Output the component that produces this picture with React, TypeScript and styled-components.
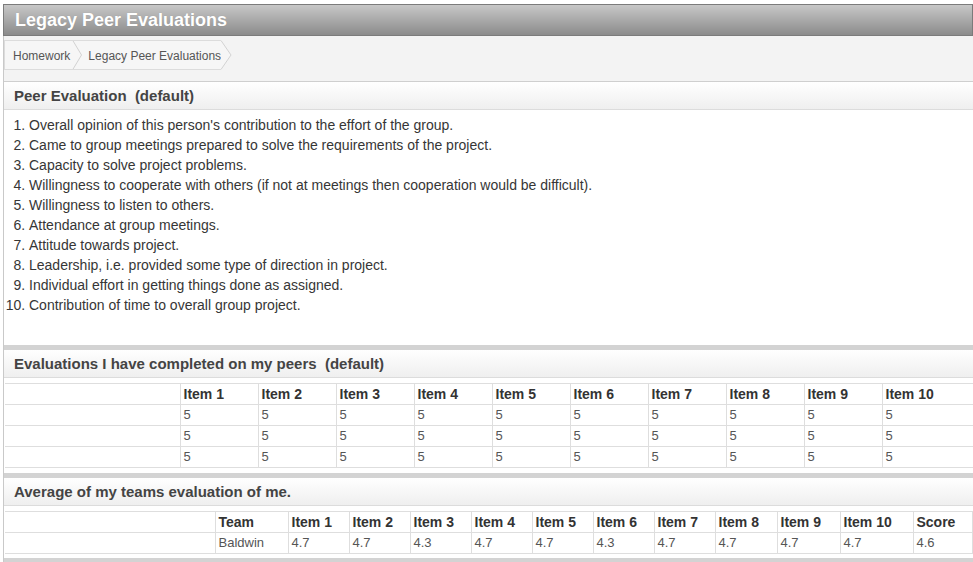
import React from "react";
import styled, { createGlobalStyle } from "styled-components";

const GlobalStyle = createGlobalStyle`
  html, body {
    margin: 0;
    padding: 0;
    background: #ffffff;
  }
  body {
    font-family: "Liberation Sans", Arial, Helvetica, sans-serif;
    color: #333;
  }
`;

const Page = styled.div`
  width: 970px;
  padding: 4px 0 0 3px;
`;

const TitleBar = styled.h1`
  margin: 0;
  height: 30px;
  display: flex;
  align-items: center;
  padding-left: 11px;
  border: 1px solid #7b7b7b;
  background: linear-gradient(#c7c7c7, #8b8b8b);
  color: #fff;
  font-size: 18px;
  font-weight: bold;
  text-shadow: 0 0 1px rgba(0, 0, 0, 0.15);
`;

const Content = styled.div`
  border-left: 1px solid #c9c9c9;
`;

const BreadcrumbBar = styled.nav`
  height: 41px;
  padding-top: 4px;
  background: #f3f3f3;
  display: flex;
  align-items: flex-start;
`;

const Crumbs = styled.div`
  display: flex;
  align-items: stretch;
  height: 30px;
`;

const CrumbTrack = styled.div`
  display: flex;
  align-items: center;
  box-sizing: border-box;
  height: 30px;
  border: 1px solid #dcdcdc;
  border-right: none;
  background: #f6f6f6;
  padding-left: 8px;
`;

const Crumb = styled.span`
  font-size: 12px;
  color: #555;
  padding-top: 3px;
  line-height: 25px;
`;

const Chevron = styled.svg`
  display: block;
  flex: none;
  margin: 0 ${(p) => p.$gap ?? 0}px 0 ${(p) => p.$lead ?? 0}px;
`;

const CrumbSep = ({ lead, gap }: { lead: number; gap: number }) => (
  <Chevron $lead={lead} $gap={gap} width="10" height="28" viewBox="0 0 10 28">
    <polyline points="0.5,-1 9.5,14 0.5,29" fill="none" stroke="#d2d2d2" strokeWidth="1" />
  </Chevron>
);

const CrumbEnd = () => (
  <Chevron width="11" height="30" viewBox="0 0 11 30">
    <polygon points="0,0.5 10,15 0,29.5" fill="#f6f6f6" stroke="none" />
    <polyline points="0,0.5 10,15 0,29.5" fill="none" stroke="#d2d2d2" strokeWidth="1" />
  </Chevron>
);

const Panel = styled.section`
  background: #fff;
  border-top: ${(p) => (p.$first ? "1px solid #cfcfcf" : "none")};
  border-bottom: 5px solid #d3d3d3;
`;

const PanelHeader = styled.h2`
  margin: 0;
  height: 27px;
  display: flex;
  align-items: center;
  padding-left: 10px;
  border-bottom: 1px solid #dcdcdc;
  background: linear-gradient(#ffffff, #efefef);
  color: #444;
  font-size: 15px;
  font-weight: bold;
  white-space: pre;
`;

const ListBody = styled.div`
  height: 235px;
  box-sizing: border-box;
  padding-top: 5px;
`;

const Criteria = styled.ol`
  margin: 0;
  padding: 0 0 0 25px;
  list-style-position: outside;
  font-size: 14px;
  line-height: 20px;
  color: #363636;
`;

const TableBody = styled.div`
  padding: ${(p) => p.$pad};
`;

const Grid = styled.table`
  border-collapse: collapse;
  table-layout: fixed;
  width: 967px;
  margin-left: 1px;
  font-size: 13px;
`;

const HeadCell = styled.th`
  height: 20px;
  padding: 0 3px;
  border: 1px solid #dedede;
  border-left: ${(p) => (p.$blank ? "none" : "1px solid #dedede")};
  text-align: left;
  font-size: 14px;
  font-weight: bold;
  color: #333;
  line-height: 20px;
  white-space: nowrap;
  overflow: hidden;
`;

const Cell = styled.td`
  height: 20px;
  padding: 0 3px;
  border: 1px solid #dedede;
  border-left: ${(p) => (p.$blank ? "none" : "1px solid #dedede")};
  color: #555;
  line-height: 20px;
  white-space: nowrap;
`;

const criteria = [
  "Overall opinion of this person's contribution to the effort of the group.",
  "Came to group meetings prepared to solve the requirements of the project.",
  "Capacity to solve project problems.",
  "Willingness to cooperate with others (if not at meetings then cooperation would be difficult).",
  "Willingness to listen to others.",
  "Attendance at group meetings.",
  "Attitude towards project.",
  "Leadership, i.e. provided some type of direction in project.",
  "Individual effort in getting things done as assigned.",
  "Contribution of time to overall group project.",
];

const items = Array.from({ length: 10 }, (_, i) => `Item ${i + 1}`);

const peerScores = [
  Array(10).fill("5"),
  Array(10).fill("5"),
  Array(10).fill("5"),
];

const myAverage = {
  team: "Baldwin",
  items: ["4.7", "4.7", "4.3", "4.7", "4.7", "4.3", "4.7", "4.7", "4.7", "4.7"],
  score: "4.6",
};

const avgWidths = [210, 73, 61, 61, 61, 61, 61, 61, 61, 62, 63, 73, 59];

export default function App() {
  return (
    <>
      <GlobalStyle />
      <Page>
        <TitleBar>Legacy Peer Evaluations</TitleBar>
        <Content>
          <BreadcrumbBar>
            <Crumbs>
              <CrumbTrack>
                <Crumb>Homework</Crumb>
                <CrumbSep lead={2} gap={6} />
                <Crumb>Legacy Peer Evaluations</Crumb>
              </CrumbTrack>
              <CrumbEnd />
            </Crumbs>
          </BreadcrumbBar>

          <Panel $first>
            <PanelHeader>{"Peer Evaluation  (default)"}</PanelHeader>
            <ListBody>
              <Criteria>
                {criteria.map((c) => (
                  <li key={c}>{c}</li>
                ))}
              </Criteria>
            </ListBody>
          </Panel>

          <Panel>
            <PanelHeader>{"Evaluations I have completed on my peers  (default)"}</PanelHeader>
            <TableBody $pad="5px 0 5px 0">
              <Grid>
                <colgroup>
                  <col style={{ width: 175 }} />
                  {items.map((it) => (
                    <col key={it} style={{ width: it === "Item 10" ? 91 : 78 }} />
                  ))}
                </colgroup>
                <thead>
                  <tr>
                    <HeadCell $blank />
                    {items.map((it) => (
                      <HeadCell key={it}>{it}</HeadCell>
                    ))}
                  </tr>
                </thead>
                <tbody>
                  {peerScores.map((row, r) => (
                    <tr key={r}>
                      <Cell $blank />
                      {row.map((v, i) => (
                        <Cell key={i}>{v}</Cell>
                      ))}
                    </tr>
                  ))}
                </tbody>
              </Grid>
            </TableBody>
          </Panel>

          <Panel>
            <PanelHeader>Average of my teams evaluation of me.</PanelHeader>
            <TableBody $pad="5px 0 4px 0">
              <Grid>
                <colgroup>
                  {avgWidths.map((w, i) => (
                    <col key={i} style={{ width: w }} />
                  ))}
                </colgroup>
                <thead>
                  <tr>
                    <HeadCell $blank />
                    <HeadCell>Team</HeadCell>
                    {items.map((it) => (
                      <HeadCell key={it}>{it}</HeadCell>
                    ))}
                    <HeadCell>Score</HeadCell>
                  </tr>
                </thead>
                <tbody>
                  <tr>
                    <Cell $blank />
                    <Cell>{myAverage.team}</Cell>
                    {myAverage.items.map((v, i) => (
                      <Cell key={i}>{v}</Cell>
                    ))}
                    <Cell>{myAverage.score}</Cell>
                  </tr>
                </tbody>
              </Grid>
            </TableBody>
          </Panel>
        </Content>
      </Page>
    </>
  );
}
